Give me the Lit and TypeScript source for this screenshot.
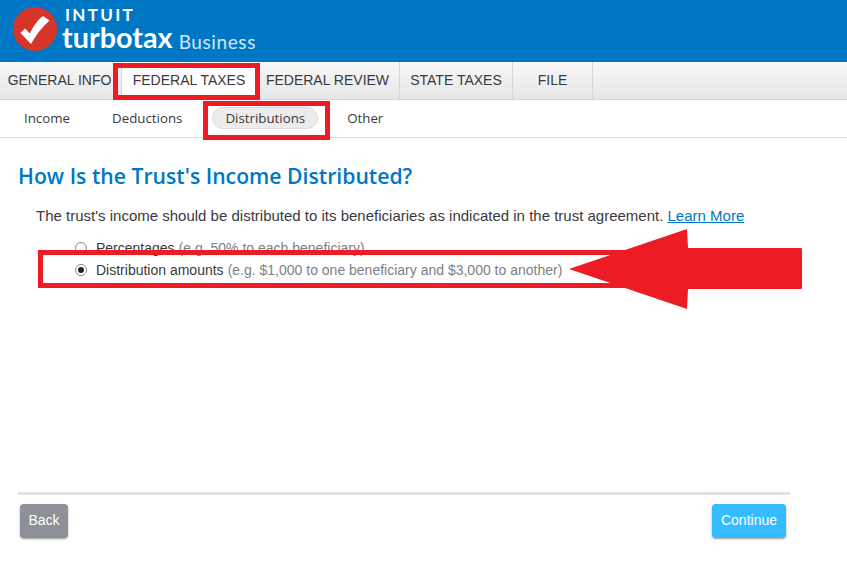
import { LitElement, html, css } from "lit";
import { customElement } from "lit/decorators.js";

@customElement("app-root")
export class AppRoot extends LitElement {
  static styles = css`
    :host { display: block; position: relative; width: 847px; height: 576px; background: #fff; overflow: hidden; font-family: "Liberation Sans", Arial, sans-serif; color: #393a3d; }
    .top { height: 62px; background: #0077c5; display: flex; padding-left: 13px; box-sizing: border-box; gap: 6px; }
    .badge { width: 44px; height: 44px; margin-top: 7px; flex: none; }
    .brand { color: #fff; flex: none; width: 210px; margin-left: -1px; }
    .intuit { font-family: "Lato", sans-serif; font-weight: 700; font-size: 17px; letter-spacing: 2.3px; line-height: 16px; margin: 7px 0 0 3px; }
    .tt { display: flex; align-items: baseline; gap: 6px; line-height: 28px; }
    .tt b { font-family: "Lato", sans-serif; font-size: 28.8px; font-weight: 700; }
    .tt span { font-size: 19px; color: #d4e6f4; font-family: "Lato", sans-serif; letter-spacing: 0.6px; transform: translateY(1px); }
    .nav { height: 37px; display: flex; background: linear-gradient(#f8f8f8, #e6e6e6); border-bottom: 1px solid #d4d7dc; font-size: 14px; }
    .nav div { display: flex; align-items: center; justify-content: center; border-right: 1px solid #d4d7dc; box-sizing: border-box; white-space: nowrap; padding-bottom: 2px; }
    .nav .on { background: #fff; }
    .n1 { width: 122px; padding-right: 2px; }
    .n2 { width: 137px; padding-right: 2px; }
    .n3 { width: 141px; padding-right: 3px; }
    .n4 { width: 113px; }
    .n5 { width: 80px; }
    .sub { height: 38px; display: flex; align-items: center; border-bottom: 1px solid #dcdcdc; font-family: "Open Sans", sans-serif; font-size: 13.3px; box-sizing: border-box; padding: 0 0 2px 24px; }
    .sub span { white-space: nowrap; }
    .s1 { margin-right: 42px; }
    .s2 { margin-right: 30px; }
    .s4 { margin-left: 29px; }
    .pill { background: #ececec; border: 1px solid #dcdcdc; border-radius: 12px; height: 22px; line-height: 20px; box-sizing: border-box; padding: 0 12px; }
    .main { padding: 25px 0 0 18px; }
    h1 { margin: 0; color: #0077c5; font-family: "Open Sans", sans-serif; font-weight: 600; font-size: 21.2px; line-height: 26px; white-space: nowrap; }
    p { margin: 18px 0 0 18px; font-size: 15px; line-height: 18px; white-space: nowrap; }
    a { color: #0077c5; text-decoration: underline; }
    .opts { margin: 12px 0 0 57px; font-size: 14px; }
    .opt { display: flex; align-items: center; height: 22px; gap: 8px; white-space: nowrap; font-size: 14px; }
    .opt i { font-style: normal; color: #7d7f84; margin-left: 4px; }
    .r { width: 14px; height: 14px; flex: none; margin-left: -1px; }
    .foot { position: absolute; left: 18px; top: 492px; width: 772px; border-top: 3px solid #e0e0e0; display: flex; justify-content: space-between; padding: 9px 4px 0 2px; box-sizing: border-box; }
    .btn { height: 34px; padding-bottom: 2px; box-sizing: border-box; border-radius: 4px; color: #fff; font-size: 14px; display: flex; align-items: center; justify-content: center; box-shadow: 0 1px 2px rgba(0,0,0,.4); }
    .back { width: 48px; background: #8d9096; }
    .cont { width: 74px; background: #35bbff; }
    .ann { position: absolute; left: 0; top: 0; pointer-events: none; }
  `;

  render() {
    return html`
      <div class="top">
        <svg class="badge" viewBox="0 0 44 44">
          <circle cx="22" cy="22" r="22" fill="#d8352a"/>
          <path d="M7.5 26 L12 21.5 L17 26.5 C20 19 25 13 30 9 L36.5 13.5 C29 20 23 28 18 37 Z" fill="#fff"/>
        </svg>
        <div class="brand">
          <div class="intuit">INTUIT</div>
          <div class="tt"><b>turbotax</b><span>Business</span></div>
        </div>
      </div>
      <div class="nav">
        <div class="n1">GENERAL INFO</div>
        <div class="n2 on">FEDERAL TAXES</div>
        <div class="n3">FEDERAL REVIEW</div>
        <div class="n4">STATE TAXES</div>
        <div class="n5">FILE</div>
      </div>
      <div class="sub">
        <span class="s1">Income</span>
        <span class="s2">Deductions</span>
        <span class="pill">Distributions</span>
        <span class="s4">Other</span>
      </div>
      <div class="main">
        <h1>How Is the Trust's Income Distributed?</h1>
        <p>The trust's income should be distributed to its beneficiaries as indicated in the trust agreement. <a href="#">Learn More</a></p>
        <div class="opts">
          <div class="opt">
            <svg class="r" viewBox="0 0 14 14"><circle cx="7" cy="7" r="5.5" fill="#fff" stroke="#8a8a8a"/></svg>
            <span>Percentages<i>(e.g. 50% to each beneficiary)</i></span>
          </div>
          <div class="opt">
            <svg class="r" viewBox="0 0 14 14"><circle cx="7" cy="7" r="5.5" fill="#fff" stroke="#8a8a8a"/><circle cx="7" cy="7" r="3" fill="#222"/></svg>
            <span>Distribution amounts<i>(e.g. $1,000 to one beneficiary and $3,000 to another)</i></span>
          </div>
        </div>
      </div>
      <div class="foot">
        <div class="btn back">Back</div>
        <div class="btn cont">Continue</div>
      </div>
      <svg class="ann" width="847" height="576" viewBox="0 0 847 576">
        <rect x="115.5" y="65.5" width="142" height="32" fill="none" stroke="#ed1c24" stroke-width="5"/>
        <rect x="205.5" y="103.5" width="122" height="34" fill="none" stroke="#ed1c24" stroke-width="5"/>
        <rect x="40.5" y="252.5" width="600" height="33" fill="none" stroke="#ed1c24" stroke-width="5"/>
        <path d="M569 269 L687 229 L688 248 L801 248 Q802 248 802 249 L802 288 Q802 289 801 289 L688 289 L687 309 Z" fill="#ed1c24"/>
      </svg>
    `;
  }
}
